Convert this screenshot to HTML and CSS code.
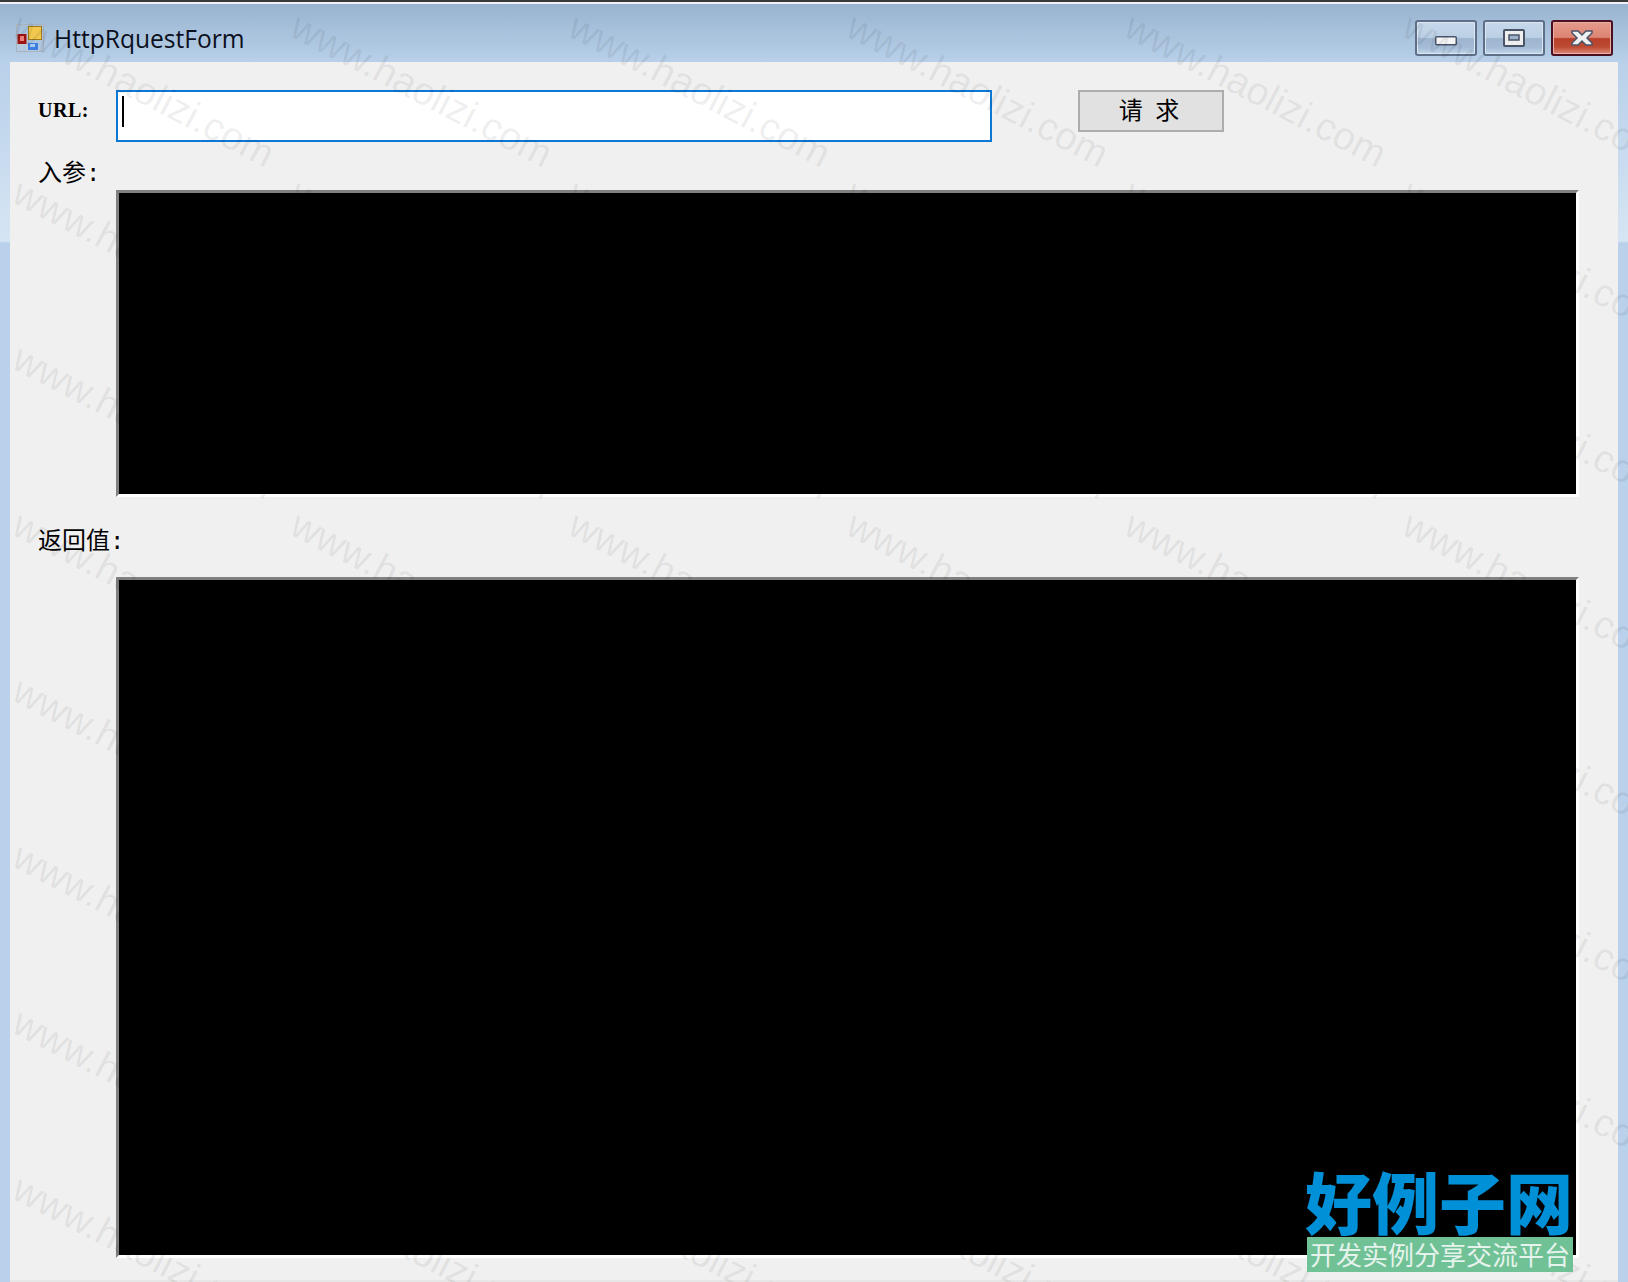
FILE: index.html
```html
<!DOCTYPE html>
<html lang="zh-CN">
<head>
    <meta charset="UTF-8">
    <meta name="viewport" content="width=device-width, initial-scale=1.0">
    <title>HttpRquestForm</title>
    <link rel="stylesheet" href="styles.css">
</head>
<body>
    <div class="window">
        <div class="titlebar">
            <svg class="app-icon" viewBox="0 0 28 28" width="28" height="28">
                <rect x="0.5" y="0.5" width="27" height="27" fill="none" stroke="#aab2bb" stroke-width="1"/>
                <path d="M1 21H11M6 21V27M11 10V27" fill="none" stroke="#c4cdd6" stroke-width="1"/>
                <rect x="1.5" y="10" width="9" height="10" fill="#9c1414"/>
                <rect x="4" y="12" width="4" height="5" fill="#e8807a"/>
                <rect x="12" y="2" width="14" height="14" fill="#a07c1c"/>
                <rect x="13" y="3" width="12" height="12" fill="#f2c94e"/>
                <rect x="12" y="19" width="10" height="7" fill="#3d7fe0"/>
                <rect x="14" y="20" width="5" height="3" fill="#a8c8f5"/>
            </svg>
            <span class="title-text">HttpRquestForm</span>
            <div class="win-buttons">
                <div class="win-btn win-min">
                    <svg viewBox="0 0 22 10" width="22" height="10"><rect x="0.75" y="0.75" width="20.5" height="8" rx="1" fill="#f4f4f4" stroke="#4a5468" stroke-width="1.5"/></svg>
                </div>
                <div class="win-btn">
                    <svg viewBox="0 0 22 18" width="22" height="18"><rect x="1" y="1" width="20" height="16" rx="1" fill="#eeeeee" stroke="#4a5468" stroke-width="2"/><rect x="6" y="6" width="10" height="5" fill="#9db3cc" stroke="#4a5468" stroke-width="1.5"/></svg>
                </div>
                <div class="win-btn win-close">
                    <svg viewBox="0 0 22 16" width="22" height="16"><path d="M1 1H7L11 5L15 1H21V3L16 8L21 13V15H15L11 11L7 15H1V13L6 8L1 3Z" fill="#f0f0f0" stroke="#4a5468" stroke-width="1.5"/></svg>
                </div>
            </div>
        </div>
        <div class="client">
            <div class="url-row">
                <label class="field-label url-label">URL:</label>
                <div class="url-input"><span class="caret"></span></div>
                <button class="submit-btn">请 求</button>
            </div>
            <div class="field-row params-row">
                <label class="field-label">入参:</label>
                <textarea class="black-box params-box" readonly></textarea>
            </div>
            <div class="field-row result-row">
                <label class="field-label">返回值:</label>
                <textarea class="black-box result-box" readonly></textarea>
            </div>
        </div>
    </div>

    <div class="watermarks" id="watermarks"></div>

    <div class="logo">
        <div class="logo-name">好例子网</div>
        <div class="logo-tag">开发实例分享交流平台</div>
    </div>

    <script>
        const box = document.getElementById("watermarks");
        for (let i = 0; i < 48; i++) {
            const mark = document.createElement("span");
            mark.innerText = "www.haolizi.com";
            box.appendChild(mark);
        }
    </script>
</body>
</html>
```

FILE: styles.css
```css
* { box-sizing: border-box; }
html, body { margin: 0; height: 100%; }
body {
    position: relative;
    overflow: hidden;
    width: 1628px;
    height: 1282px;
    background: #b9d1ea;
}

.window {
    display: flex;
    flex-direction: column;
    height: 100%;
    border-top: 2px solid #3a3a3a;
    background: linear-gradient(to bottom, #98b3cf 0, #b8d0e9 60px, #d6e5f4 239px, #b9d1ea 241px);
}

.titlebar {
    display: flex;
    align-items: center;
    height: 60px;
    padding: 10px 15px 0 16px;
    border-top: 2px solid #eef2f6;
}
.app-icon { flex: none; }
.title-text {
    margin-left: 10px;
    font-family: "Open Sans", sans-serif;
    font-size: 24.6px;
    color: #0b1020;
}
.win-buttons { display: flex; gap: 6px; margin-left: auto; }
.win-btn {
    display: flex;
    align-items: center;
    justify-content: center;
    width: 62px;
    height: 36px;
    border: 2px solid #5f6f88;
    border-radius: 3px;
    background: linear-gradient(to bottom, #c6d8ea 0, #bcd0e5 48%, #9fb5cf 52%, #a5bcd6 80%, #c3d7ec 100%);
    box-shadow: inset 0 0 0 1px #dbe7f3;
}
.win-min svg { margin-top: 5px; }
.win-close {
    border-color: #4d1020;
    background: linear-gradient(to bottom, #e59a8c 0, #dc8573 48%, #b9402a 52%, #bd4a32 78%, #dd8c7b 100%);
    box-shadow: inset 0 0 0 1px #e9b0a6;
}

.client {
    flex: 1;
    margin: 0 10px;
    padding: 28px 39px 0 28px;
    border-bottom: 2px solid #e6e6e6;
    background: #f0f0f0;
}

.field-label {
    flex: none;
    width: 78px;
    margin-top: 3px;
    font-family: "Liberation Mono", "Noto Sans CJK SC", monospace;
    font-size: 24px;
    line-height: 24px;
    white-space: nowrap;
    color: #000;
}
.url-label {
    margin-top: 6px;
    font-family: "Liberation Serif", serif;
    font-size: 20px;
    font-weight: bold;
    line-height: 28px;
    letter-spacing: 0.5px;
}

.url-row { display: flex; align-items: flex-start; }
.url-input {
    display: flex;
    width: 876px;
    height: 52px;
    padding: 4px;
    border: 2px solid #0c78d4;
    background: #fff;
}
.caret { width: 2px; height: 31px; background: #000; }
.submit-btn {
    width: 146px;
    height: 42px;
    margin-left: 86px;
    padding: 0 4px 4px 0;
    border: 2px solid #adadad;
    background: #e1e1e1;
    font-family: "Noto Sans CJK SC", sans-serif;
    font-size: 24px;
    line-height: 32px;
    word-spacing: 7px;
    color: #000;
}

.field-row { display: flex; align-items: flex-start; }
.params-row { margin-top: 18px; }
.result-row { margin-top: 31px; }
.black-box {
    display: block;
    width: 1463px;
    padding: 0;
    border: 3px solid;
    border-color: #808080 #fff #fff #808080;
    background: #000;
    resize: none;
    outline: none;
}
.params-box { height: 307px; margin-top: 30px; }
.result-box { height: 681px; margin-top: 49px; }

/* site watermark, lies over the whole window */
.watermarks {
    position: absolute;
    top: 0;
    left: 0;
    width: 1628px;
    height: 1282px;
    display: grid;
    grid-template-columns: repeat(6, 278px);
    grid-auto-rows: 166px;
    padding: 6px 0 0 25px;
    overflow: hidden;
    pointer-events: none;
}
.watermarks span {
    display: block;
    width: 278px;
    font-family: "Liberation Sans", sans-serif;
    font-size: 39px;
    line-height: 39px;
    white-space: nowrap;
    color: rgba(0, 0, 0, 0.08);
    transform-origin: 0 0;
    transform: rotate(27.5deg);
}

.logo {
    position: absolute;
    left: 1305px;
    top: 1162px;
    width: 268px;
}
.logo-name {
    font-family: "Noto Sans CJK SC", sans-serif;
    font-size: 67px;
    font-weight: 900;
    line-height: 75px;
    white-space: nowrap;
    color: #0090d8;
}
.logo-tag {
    height: 35px;
    margin: 0 0 0 2px;
    font-family: "Noto Sans CJK SC", sans-serif;
    font-size: 26px;
    line-height: 34px;
    text-align: center;
    white-space: nowrap;
    color: #e6f3ec;
    background: #70c296;
}
```
